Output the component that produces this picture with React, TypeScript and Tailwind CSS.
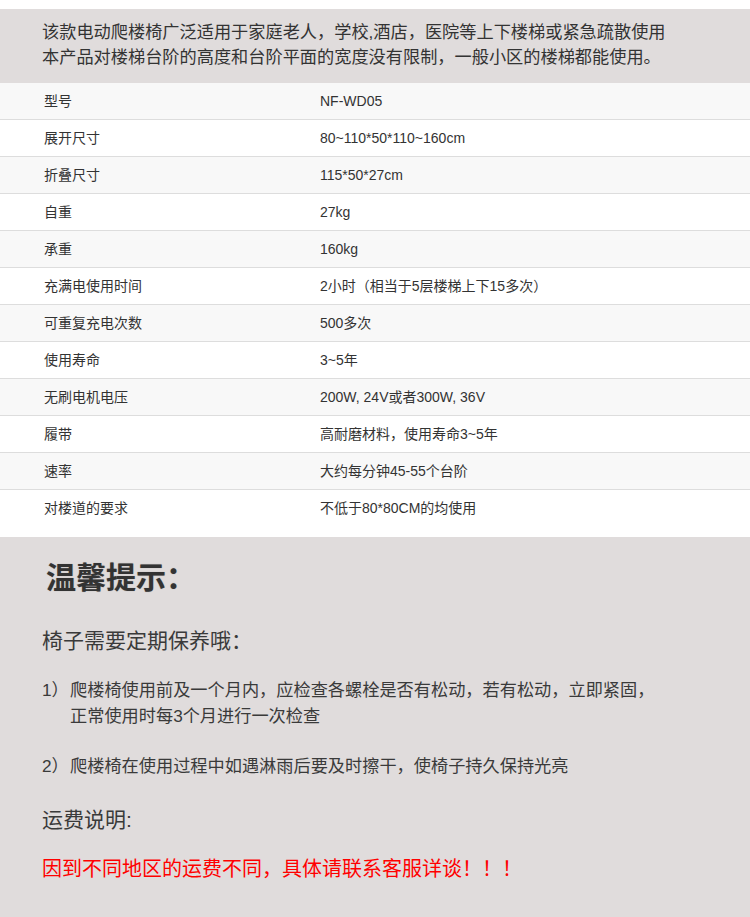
const specs: [string, string][] = [
  ["型号", "NF-WD05"],
  ["展开尺寸", "80~110*50*110~160cm"],
  ["折叠尺寸", "115*50*27cm"],
  ["自重", "27kg"],
  ["承重", "160kg"],
  ["充满电使用时间", "2小时（相当于5层楼梯上下15多次）"],
  ["可重复充电次数", "500多次"],
  ["使用寿命", "3~5年"],
  ["无刷电机电压", "200W, 24V或者300W, 36V"],
  ["履带", "高耐磨材料，使用寿命3~5年"],
  ["速率", "大约每分钟45-55个台阶"],
  ["对楼道的要求", "不低于80*80CM的均使用"],
]

const font = { fontFamily: '"Liberation Sans", "Noto Sans CJK SC", sans-serif' }

export default function App() {
  return (
    <div className="w-[750px] min-h-[917px] bg-white pt-[9px]" style={font}>
      <div className="bg-[#e0dcdc] pl-[42px] pt-[11px] pb-[13px] text-[17.2px] leading-[25px] text-[#333]">
        <p>该款电动爬楼椅广泛适用于家庭老人，学校,酒店，医院等上下楼梯或紧急疏散使用</p>
        <p>本产品对楼梯台阶的高度和台阶平面的宽度没有限制，一般小区的楼梯都能使用。</p>
      </div>

      <div className="pb-[10px]">
        {specs.map(([k, v], i) => (
          <div
            key={k}
            className={`flex h-[37px] items-start text-[14px] text-[#333] ${
              i % 2 === 0 ? "bg-[#f8f8f8]" : "bg-white"
            } ${i < specs.length - 1 ? "border-b border-[#dddddd]" : ""}`}
          >
            <div className="w-[320px] pl-[44px] leading-[36px]">{k}</div>
            <div className="leading-[36px]">{v}</div>
          </div>
        ))}
      </div>

      <div className="bg-[#e0dcdc] h-[381px] pl-[42px] pt-[21px] text-[#3a3a3a]">
        <h2 className="pl-[4px] text-[30px] font-bold leading-[40px] text-[#333] [text-shadow:0_0_1px_rgba(0,0,0,0.3)]">
          温馨提示：
        </h2>
        <p className="mt-[28px] text-[21px] leading-[30px]">椅子需要定期保养哦：</p>
        <div className="mt-[21px] flex text-[17.2px] leading-[26px]">
          <span className="w-[28px] shrink-0">1）</span>
          <p>
            爬楼椅使用前及一个月内，应检查各螺栓是否有松动，若有松动，立即紧固，
            <br />
            正常使用时每3个月进行一次检查
          </p>
        </div>
        <div className="mt-[24px] flex text-[17.2px] leading-[26px]">
          <span className="w-[28px] shrink-0">2）</span>
          <p>爬楼椅在使用过程中如遇淋雨后要及时擦干，使椅子持久保持光亮</p>
        </div>
        <p className="mt-[26px] text-[21px] leading-[30px]">运费说明:</p>
        <p className="mt-[20px] text-[20px] leading-[28px] text-[#ff0000]">
          因到不同地区的运费不同，具体请联系客服详谈！！！
        </p>
      </div>
    </div>
  )
}
